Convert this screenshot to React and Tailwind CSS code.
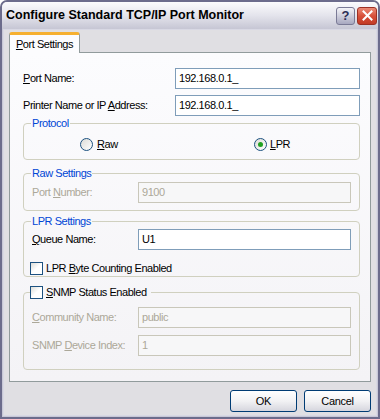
import React from 'react';

const font = { fontFamily: '"Liberation Sans", Arial, sans-serif' };

const TextBox = ({ value, disabled }) => (
  <div
    className={`h-[21px] flex items-center px-[3px] text-[11px] ${
      disabled
        ? 'border border-[#c9c7ba] bg-[#f7f7f8] text-[#aca899]'
        : 'border border-[#7f9db9] bg-white text-black'
    }`}
  >
    {value}
  </div>
);

const Check = () => (
  <span className="inline-block w-[13px] h-[13px] border border-[#1c5180] bg-gradient-to-br from-[#dcdcd7] via-white to-white shrink-0" />
);

const Radio = ({ checked }) => (
  <span className="w-[13px] h-[13px] rounded-full border border-[#1c5180] bg-gradient-to-br from-[#dcdcd7] to-white flex items-center justify-center shrink-0">
    {checked && <span className="w-[5px] h-[5px] rounded-full bg-[#21a121]" />}
  </span>
);

const Group = ({ legend, className, children }) => (
  <fieldset className={`border border-[#d0d0bf] rounded-[4px] px-[8px] ${className}`}>
    <legend className="px-[1px] -ml-[1px] text-[11px] leading-[13px] text-[#0046d5]">{legend}</legend>
    {children}
  </fieldset>
);

const Row = ({ label, value, disabled, labelW, className }) => (
  <div className={`flex items-center ${className}`}>
    <span className={`${labelW} ${disabled ? 'text-[#aca899]' : 'text-black'}`}>{label}</span>
    <div className="flex-1">
      <TextBox value={value} disabled={disabled} />
    </div>
  </div>
);

export default function App() {
  return (
    <div
      style={font}
      className="w-[380px] h-[419px] bg-[#c8c8d6] border-[2px] border-[#6c6c8c] rounded-t-[7px] flex flex-col tracking-[-0.45px] text-[11px]"
    >
      {/* title bar */}
      <div className="h-[27px] flex items-center pl-[4px] pr-[1px] bg-gradient-to-b from-[#fbfbfd] via-[#e4e4ec] to-[#c6c6d4] rounded-t-[5px]">
        <span className="text-[12.5px] font-bold text-black tracking-[0px] flex-1">
          Configure Standard TCP/IP Port Monitor
        </span>
        <div className="flex gap-[2px] items-center">
          <span className="w-[19px] h-[18px] rounded-[3px] border border-[#7a7a96] bg-gradient-to-b from-[#f4f4f8] to-[#a8a8c0] flex items-center justify-center text-[13px] font-bold text-[#2c2c56] tracking-normal">
            ?
          </span>
          <span className="w-[20px] h-[18px] rounded-[3px] border border-[#9c3024] bg-gradient-to-b from-[#ea8a76] via-[#d8503a] to-[#c23a26] flex items-center justify-center">
            <svg width="11" height="11" viewBox="0 0 11 11">
              <path d="M1.5 1.5 L9.5 9.5 M9.5 1.5 L1.5 9.5" stroke="white" strokeWidth="2" strokeLinecap="square" />
            </svg>
          </span>
        </div>
      </div>

      {/* body */}
      <div className="flex-1 mx-[1px] mb-[1px] bg-[#e0dfe3] border border-[#d8d8e4] px-[5px] pt-[2px] flex flex-col">
        {/* tab header */}
        <div className="flex h-[20px] relative z-10">
          <div className="w-[71px] h-[21px] bg-[#fcfcfe] border-x border-[#919b9c] rounded-t-[3px] border-t-[3px] border-t-[#f6b030] flex items-center justify-center text-black">
            <span><u>P</u>ort Settings</span>
          </div>
        </div>

        {/* tab panel */}
        <div className="h-[330px] border border-[#919b9c] bg-gradient-to-b from-[#fcfcfe] to-[#f4f3f6] pl-[13px] pr-[10px] pt-[15px]">
          <Row label={<><u>P</u>ort Name:</>} value="192.168.0.1_" labelW="w-[152px]" />
          <Row
            label={<>Printer Name or IP <u>A</u>ddress:</>}
            value="192.168.0.1_"
            labelW="w-[152px]"
            className="mt-[6px]"
          />

          <Group legend="Protocol" className="mt-[1px] h-[43px]">
            <div className="flex items-center h-[29px] pl-[48px]">
              <label className="flex items-center gap-[4px] w-[174px]">
                <Radio />
                <span><u>R</u>aw</span>
              </label>
              <label className="flex items-center gap-[3px]">
                <Radio checked />
                <span><u>L</u>PR</span>
              </label>
            </div>
          </Group>

          <Group legend="Raw Settings" className="mt-[7px] h-[44px]">
            <Row
              label={<>Port <u>N</u>umber:</>}
              value="9100"
              disabled
              labelW="w-[106px]"
              className="mt-[2px]"
            />
          </Group>

          <Group legend="LPR Settings" className="mt-[4px] h-[62px]">
            <Row label={<><u>Q</u>ueue Name:</>} value="U1" labelW="w-[106px]" className="mt-[1px]" />
            <label className="flex items-center gap-[3px] mt-[10px] -ml-[2px]">
              <Check />
              <span>LPR <u>B</u>yte Counting Enabled</span>
            </label>
          </Group>

          <fieldset className="mt-[9px] h-[84px] border border-[#d0d0bf] rounded-[4px] px-[8px]">
            <legend className="-ml-[2px] pr-[4px] flex items-center gap-[3px] leading-[13px] text-black">
              <Check />
              <span><u>S</u>NMP Status Enabled</span>
            </legend>
            <Row
              label={<><u>C</u>ommunity Name:</>}
              value="public"
              disabled
              labelW="w-[106px]"
              className="mt-[8px]"
            />
            <Row
              label={<>SNMP <u>D</u>evice Index:</>}
              value="1"
              disabled
              labelW="w-[106px]"
              className="mt-[7px]"
            />
          </fieldset>
        </div>

        {/* buttons */}
        <div className="flex justify-end gap-[7px] mt-[8px]">
          {['OK', 'Cancel'].map((t) => (
            <button
              key={t}
              className="w-[67px] h-[22px] rounded-[3px] border border-[#003c74] bg-gradient-to-b from-white via-[#f2f2f4] to-[#d6d6de] text-black text-[11px] tracking-[-0.3px]"
            >
              {t}
            </button>
          ))}
        </div>
      </div>
    </div>
  );
}
